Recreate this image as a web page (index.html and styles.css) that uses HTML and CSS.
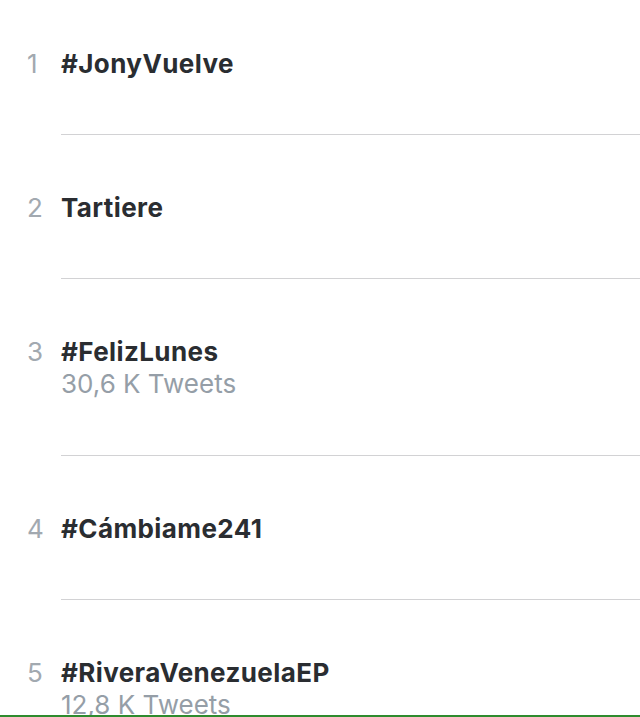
FILE: index.html
```html
<!DOCTYPE html>
<html lang="es">
<head>
  <meta charset="UTF-8" />
  <meta name="viewport" content="width=device-width, initial-scale=1.0" />
  <title>Tendencias</title>
  <link rel="stylesheet" href="styles.css">
</head>
<body>
  <ol class="trends">
    <li class="trend">
      <span class="rank">1</span>
      <div class="info">
        <div class="name">#JonyVuelve</div>
      </div>
    </li>
    <li class="trend">
      <span class="rank">2</span>
      <div class="info">
        <div class="name">Tartiere</div>
      </div>
    </li>
    <li class="trend">
      <span class="rank">3</span>
      <div class="info">
        <div class="name">#FelizLunes</div>
        <div class="count">30,6 K Tweets</div>
      </div>
    </li>
    <li class="trend">
      <span class="rank">4</span>
      <div class="info">
        <div class="name">#Cámbiame241</div>
      </div>
    </li>
    <li class="trend">
      <span class="rank">5</span>
      <div class="info">
        <div class="name">#RiveraVenezuelaEP</div>
        <div class="count">12,8 K Tweets</div>
      </div>
    </li>
  </ol>

  <div class="bottom-bar"></div>
</body>
</html>
```

FILE: styles.css
```css
html, body {
  margin: 0;
  padding: 0;
  background: #ffffff;
  overflow: hidden;
}

body {
  font-family: Inter, 'Noto Sans', 'Liberation Sans', sans-serif;
  font-size: 26px;
  line-height: 30px;
  color: #2a2d31;
  height: 717px;
}

.trends {
  list-style: none;
  margin: 0;
  padding: 0;
}

.trend {
  display: flex;
  align-items: flex-start;
}

.rank {
  width: 34px;
  padding-left: 27px;
  padding-top: 58px;
  color: #a2a9b0;
  font-weight: 400;
}

.trend:first-child .rank,
.trend:first-child .info {
  padding-top: 49px;
}

.info {
  flex: 1;
  padding-top: 58px;
  padding-bottom: 55px;
  border-bottom: 1px solid #d2d2d4;
}

.name {
  font-weight: 700;
  letter-spacing: 0.4px;
}

.count {
  color: #959ea7;
  font-weight: 400;
  line-height: 33px;
}

.bottom-bar {
  position: fixed;
  left: 0;
  right: 0;
  bottom: 0;
  height: 2px;
  background: #2e8b2e;
}
```
